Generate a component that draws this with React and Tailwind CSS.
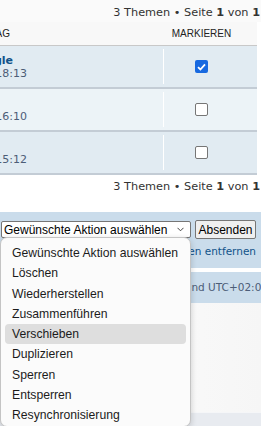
import React from 'react';

const rows = [
  { title: 'gle', meta: '18:13', bg: 'bg-[#e1ebf2]', checked: true },
  { title: '\u00a0', meta: '16:10', bg: 'bg-[#ecf3f7]', checked: false },
  { title: '\u00a0', meta: '15:12', bg: 'bg-[#e1ebf2]', checked: false },
];

const actions = [
  'Gewünschte Aktion auswählen',
  'Löschen',
  'Wiederherstellen',
  'Zusammenführen',
  'Verschieben',
  'Duplizieren',
  'Sperren',
  'Entsperren',
  'Resynchronisierung',
];

function Pagination() {
  return (
    <div className="flex justify-end whitespace-nowrap pr-[1px] text-[11.3px] leading-[13px] text-[#333]">
      3 Themen • Seite&nbsp;<b>1</b>&nbsp;von&nbsp;<b>1</b>
    </div>
  );
}

function Checkbox({ checked }) {
  if (checked) {
    return (
      <div className="w-[13px] h-[13px] rounded-[2px] bg-[#1769e0] flex items-center justify-center">
        <svg width="9" height="8" viewBox="0 0 9 8">
          <path d="M1 4.2 L3.4 6.5 L8 1.4" fill="none" stroke="#fff" strokeWidth="1.8" />
        </svg>
      </div>
    );
  }
  return <div className="w-[13px] h-[13px] rounded-[2px] border border-[#767676] bg-white" />;
}

export default function App() {
  return (
    <div className="relative w-[261px] h-[426px] overflow-hidden bg-white font-['DejaVu_Sans',Verdana,sans-serif]">
      <div className="bg-[#fafafa] pt-[6px] h-[22px]">
        <Pagination />
      </div>

      <div className="w-[257px]">
        <div className="flex h-[24px] bg-[#f8f8f8] border-b border-[#c8c8c8] text-[10px] text-[#222] font-['Liberation_Sans',Arial,sans-serif] items-center">
          <div className="w-[163px] flex">
            <div className="w-[10px] overflow-hidden flex justify-end whitespace-nowrap">EINTRAG</div>
          </div>
          <div className="flex-1 flex justify-center pr-[18px] pl-[1px]">MARKIEREN</div>
        </div>

        {rows.map((r, i) => (
          <div key={i} className={`flex h-[43px] py-[3px] border-b-2 border-[#c3ccd5] ${r.bg}`}>
            <div className="w-[163px] flex flex-col justify-center text-[11px] leading-[13px]">
              <div className="w-[13px] overflow-hidden flex justify-end whitespace-nowrap font-bold text-[#105289]">
                {r.title}
              </div>
              <div className="w-[27px] overflow-hidden flex justify-end whitespace-nowrap text-[#4c5d77]">
                {r.meta}
              </div>
            </div>
            <div className="w-px bg-white" />
            <div className="flex-1 flex items-center justify-center pr-[18px]">
              <Checkbox checked={r.checked} />
            </div>
          </div>
        ))}
      </div>

      <div className="h-[37px] pt-[5px]">
        <Pagination />
      </div>

      <div className="bg-[#cadceb] h-[56px] pt-[8px]">
        <div className="flex items-center gap-[4px] pl-[1px] font-['Liberation_Sans',Arial,sans-serif] text-[12px]">
          <div className="w-[190px] h-[17px] bg-white border border-[#767676] rounded-[2px] flex items-center justify-between pl-[2px] pr-[6px] text-black whitespace-nowrap">
            <span>Gewünschte Aktion auswählen</span>
            <svg width="7" height="5" viewBox="0 0 7 5">
              <path d="M0.5 0.8 L3.5 3.8 L6.5 0.8" fill="none" stroke="#444" strokeWidth="1" />
            </svg>
          </div>
          <div className="w-[61px] h-[19px] bg-[#efefef] border border-[#767676] rounded-[2px] flex items-center justify-center text-black">
            Absenden
          </div>
        </div>
        <div className="flex justify-end pr-[5px] mt-[5px] text-[10.5px] leading-[14px] text-[#105289] whitespace-nowrap">
          Alle markieren • Markierungen entfernen
        </div>
      </div>

      <div className="h-[4px] bg-white" />
      <div className="bg-[#cadceb] h-[31px] flex items-center justify-end whitespace-nowrap text-[10.5px] text-[#4c5d77] mr-[-7px]">
        Alle Zeiten sind UTC+02:00
      </div>

      <div className="h-[109px] bg-gradient-to-r from-white to-[#f6f6f6]" />
      <div className="h-[16px] bg-[#e8ebf0] border-t border-[#f5f6f8]" />

      <div className="absolute left-0 top-[237px] w-[191px] h-[190px] bg-[#fbfbfb] border border-[#c4c4c4] rounded-[7px] shadow-[0_2px_6px_rgba(0,0,0,0.18)] pt-[5px] px-[4px] font-['Liberation_Sans',Arial,sans-serif] text-[12.2px] text-[#1b1b1b]">
        {actions.map((a) => (
          <div
            key={a}
            className={`h-[20.3px] flex items-center pl-[7px] rounded-[4px] whitespace-nowrap ${a === 'Verschieben' ? 'bg-[#dedede]' : ''}`}
          >
            {a}
          </div>
        ))}
      </div>
    </div>
  );
}
